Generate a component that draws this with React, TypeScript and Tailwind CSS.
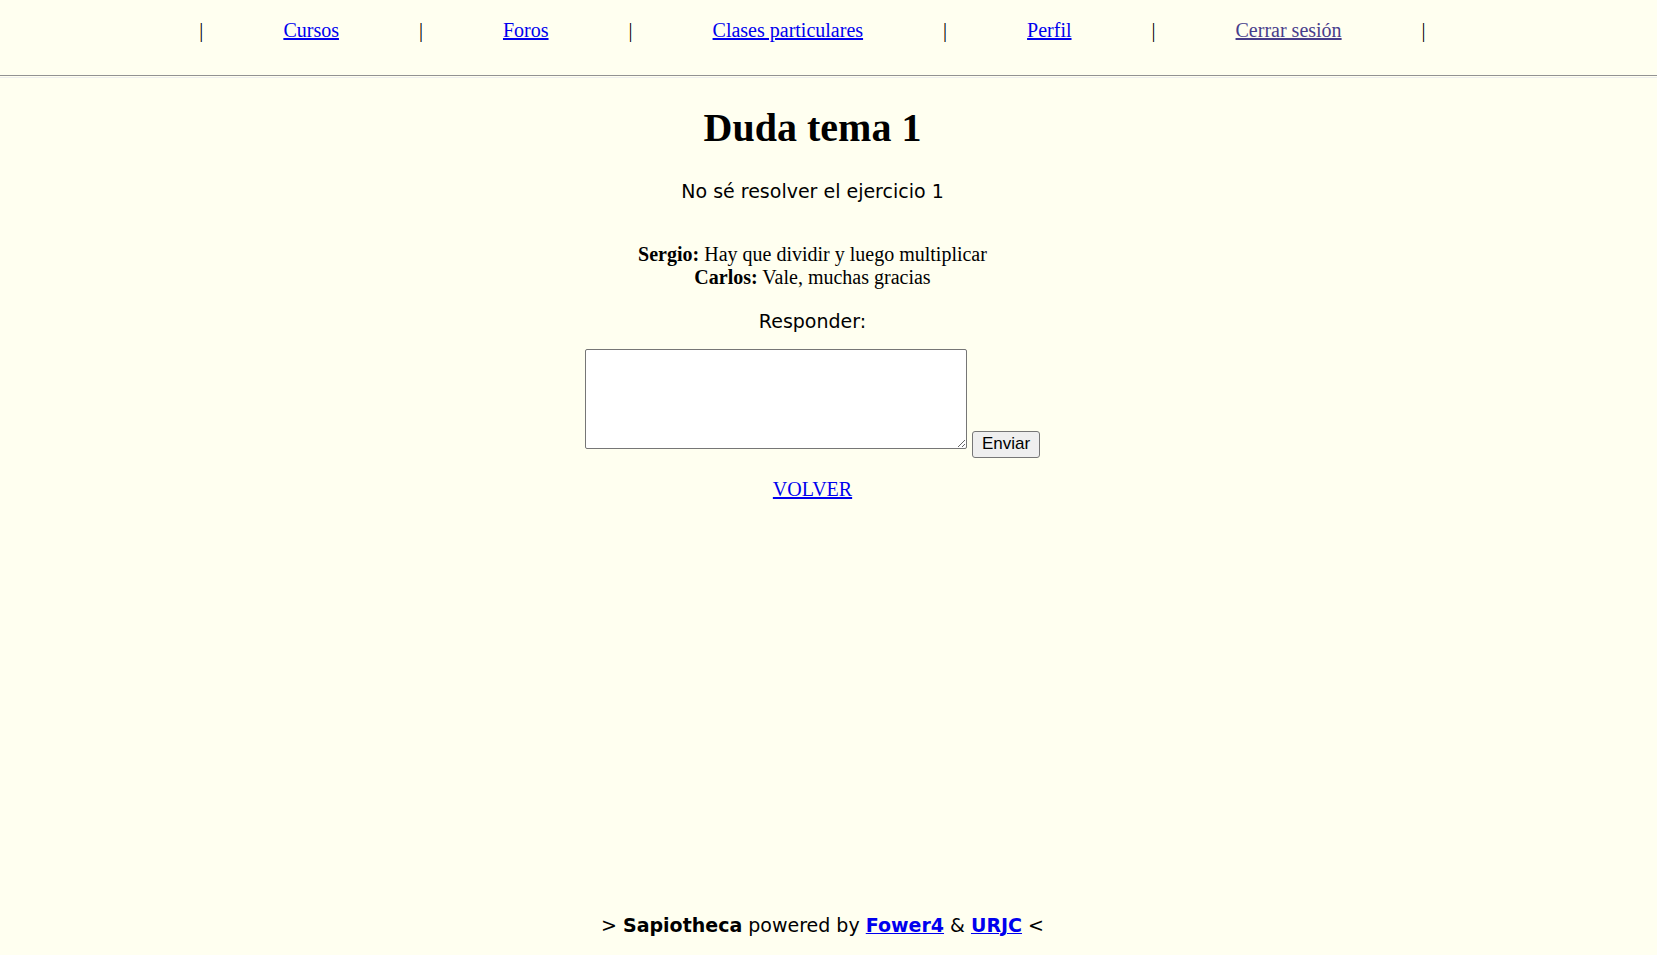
import { Fragment } from "react";

const navLinks = [
  { label: "Cursos", href: "#cursos", color: "text-[#0000ee]" },
  { label: "Foros", href: "#foros", color: "text-[#0000ee]" },
  { label: "Clases particulares", href: "#clases", color: "text-[#0000ee]" },
  { label: "Perfil", href: "#perfil", color: "text-[#0000ee]" },
  { label: "Cerrar sesión", href: "#salir", color: "text-[#483d8b]" },
];

const replies = [
  { author: "Sergio", text: "Hay que dividir y luego multiplicar" },
  { author: "Carlos", text: "Vale, muchas gracias" },
];

export default function App() {
  return (
    <div className="flex min-h-screen flex-col bg-[#fffff0] font-['Liberation_Serif',serif] text-[20px] leading-[23px] text-black">
      <header className="border-b border-[#929292] pt-[19px] pr-8 pb-[33px]">
        <nav className="flex justify-center gap-20">
          <span>|</span>
          {navLinks.map((link) => (
            <Fragment key={link.label}>
              <a href={link.href} className={`underline decoration-2 ${link.color}`}>
                {link.label}
              </a>
              <span>|</span>
            </Fragment>
          ))}
        </nav>
      </header>
      <div className="mt-px border-t border-[#eeeeee]" />

      <main className="flex flex-1 flex-col items-center pt-[27px] pr-8">
        <h1 className="text-[40px] leading-[46px] font-bold">Duda tema 1</h1>
        <p className="mt-7 font-['DejaVu_Sans',sans-serif] text-[19px] leading-6">No sé resolver el ejercicio 1</p>
        <div className="mt-10 text-center">
          {replies.map((reply) => (
            <p key={reply.author}>
              <b>{reply.author}:</b> {reply.text}
            </p>
          ))}
        </div>
        <form className="mt-5 flex flex-col items-center" onSubmit={(e) => e.preventDefault()}>
          <label htmlFor="respuesta" className="font-['DejaVu_Sans',sans-serif] text-[19px] leading-6">
            Responder:
          </label>
          <div className="mt-4 flex items-end gap-[5px]">
            <textarea
              id="respuesta"
              className="mb-[9px] h-[100px] w-[382px] resize rounded-[2px] border border-[#767676] bg-white p-[3px]"
            />
            <button
              type="submit"
              className="h-[27px] w-[68px] rounded-[3px] border border-[#767676] bg-[#efefef] pb-[2px] font-['Liberation_Sans',sans-serif] text-[17px] leading-5"
            >
              Enviar
            </button>
          </div>
        </form>
        <a href="#volver" className="mt-5 text-[#0000ee] underline decoration-2">
          VOLVER
        </a>
      </main>

      <footer className="pr-3 pb-[18px] text-center font-['DejaVu_Sans',sans-serif] text-[19px] leading-6">
        &gt; <b>Sapiotheca</b> powered by{" "}
        <a href="#fower4" className="font-bold text-[#0000ee] underline decoration-1">
          Fower4
        </a>{" "}
        &amp;{" "}
        <a href="#urjc" className="font-bold text-[#0000ee] underline decoration-1">
          URJC
        </a>{" "}
        &lt;
      </footer>
    </div>
  );
}
